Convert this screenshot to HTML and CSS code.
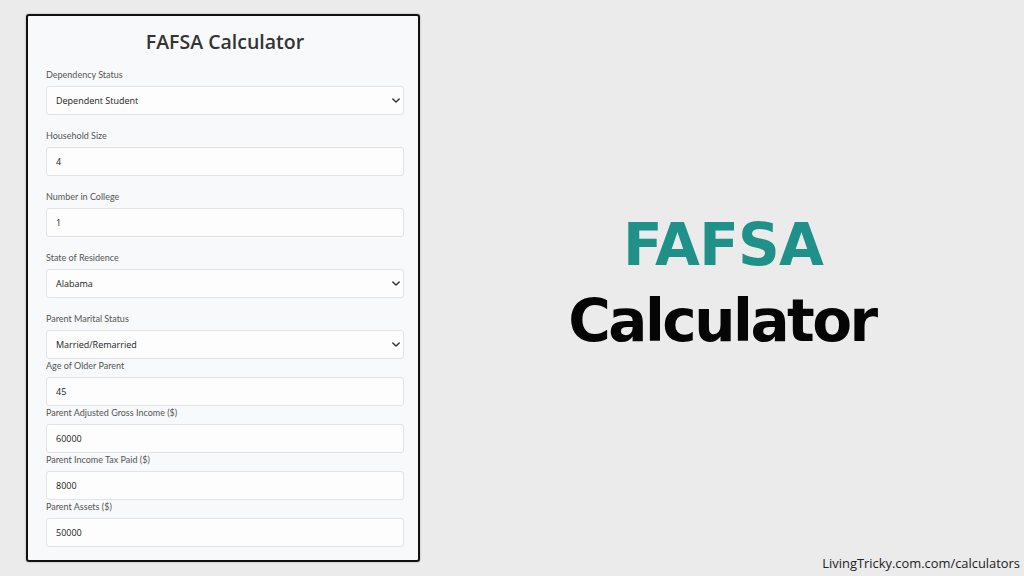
FILE: index.html
```html
<!DOCTYPE html>
<html lang="en">
<head>
<meta charset="utf-8">
<title>FAFSA Calculator</title>
<link rel="stylesheet" href="styles.css">
</head>
<body>
<div class="page">
  <div class="card">
    <h1 class="card-title">FAFSA Calculator</h1>

    <div class="group spaced">
      <label class="lbl">Dependency Status</label>
      <div class="select-wrap">
        <select class="field"><option>Dependent Student</option></select>
        <svg class="chev" viewBox="0 0 10 6" width="8" height="5"><path d="M1 1 L5 5 L9 1" fill="none" stroke="#333" stroke-width="1.8" stroke-linecap="round" stroke-linejoin="round"/></svg>
      </div>
    </div>

    <div class="group spaced">
      <label class="lbl">Household Size</label>
      <input class="field" type="text" value="4">
    </div>

    <div class="group spaced">
      <label class="lbl">Number in College</label>
      <input class="field" type="text" value="1">
    </div>

    <div class="group spaced">
      <label class="lbl">State of Residence</label>
      <div class="select-wrap">
        <select class="field"><option>Alabama</option></select>
        <svg class="chev" viewBox="0 0 10 6" width="8" height="5"><path d="M1 1 L5 5 L9 1" fill="none" stroke="#333" stroke-width="1.8" stroke-linecap="round" stroke-linejoin="round"/></svg>
      </div>
    </div>

    <div class="group">
      <label class="lbl">Parent Marital Status</label>
      <div class="select-wrap">
        <select class="field"><option>Married/Remarried</option></select>
        <svg class="chev" viewBox="0 0 10 6" width="8" height="5"><path d="M1 1 L5 5 L9 1" fill="none" stroke="#333" stroke-width="1.8" stroke-linecap="round" stroke-linejoin="round"/></svg>
      </div>
    </div>

    <div class="group">
      <label class="lbl">Age of Older Parent</label>
      <input class="field" type="text" value="45">
    </div>

    <div class="group">
      <label class="lbl">Parent Adjusted Gross Income ($)</label>
      <input class="field" type="text" value="60000">
    </div>

    <div class="group">
      <label class="lbl">Parent Income Tax Paid ($)</label>
      <input class="field" type="text" value="8000">
    </div>

    <div class="group">
      <label class="lbl">Parent Assets ($)</label>
      <input class="field" type="text" value="50000">
    </div>
  </div>

  <div class="hero">
    <div class="hero-top">FAFSA</div>
    <div class="hero-bottom">Calculator</div>
  </div>

  <div class="credit">LivingTricky.com.com/calculators</div>
</div>
</body>
</html>
```

FILE: styles.css
```css
* { box-sizing: border-box; }
html, body { margin: 0; padding: 0; }
body {
  background: #ebebeb;
  font-family: "Open Sans", "Noto Sans", sans-serif;
}
.page {
  position: relative;
  width: 1024px;
  height: 576px;
  display: flex;
  align-items: flex-start;
  padding: 14px 0 0 26px;
}
.card {
  width: 394px;
  height: 548px;
  background: #f8f9fa;
  border: 2px solid #111;
  border-radius: 3px;
  padding: 12px 14px 0 18px;
  box-shadow: 0 0 2px rgba(0,0,0,0.3);
}
.card-title {
  margin: 0 0 12px 0;
  text-align: center;
  font-size: 19.5px;
  line-height: 28px;
  font-weight: 600;
  color: #333;
}
.group { display: flex; flex-direction: column; }
.group.spaced { margin-bottom: 14px; }
.lbl {
  font-family: "Lato", "Open Sans", sans-serif;
  font-size: 9px;
  line-height: 14px;
  color: #555;
  margin-bottom: 4px;
}
.field {
  width: 100%;
  height: 29px;
  border: 1px solid #e2e3e5;
  border-radius: 3px;
  background: #fdfdfd;
  padding: 0 9px;
  font-family: inherit;
  font-size: 9px;
  color: #222;
  outline: none;
  -webkit-appearance: none;
  appearance: none;
}
.select-wrap { position: relative; }
.chev {
  position: absolute;
  right: 4px;
  top: 12px;
}
.hero {
  flex: 1;
  height: 548px;
  display: flex;
  flex-direction: column;
  align-items: center;
  justify-content: center;
  font-family: "DejaVu Sans", sans-serif;
  font-weight: bold;
  padding-bottom: 10px;
}
.hero-top {
  color: #1f9189;
  font-size: 58px;
  line-height: 64px;
  letter-spacing: -0.8px;
  margin-bottom: 12px;
  padding-left: 2px;
}
.hero-bottom {
  color: #050505;
  font-size: 58px;
  line-height: 64px;
  letter-spacing: -2.5px;
}
.credit {
  position: absolute;
  right: 4px;
  bottom: 4px;
  font-size: 12.9px;
  color: #222;
}
```
